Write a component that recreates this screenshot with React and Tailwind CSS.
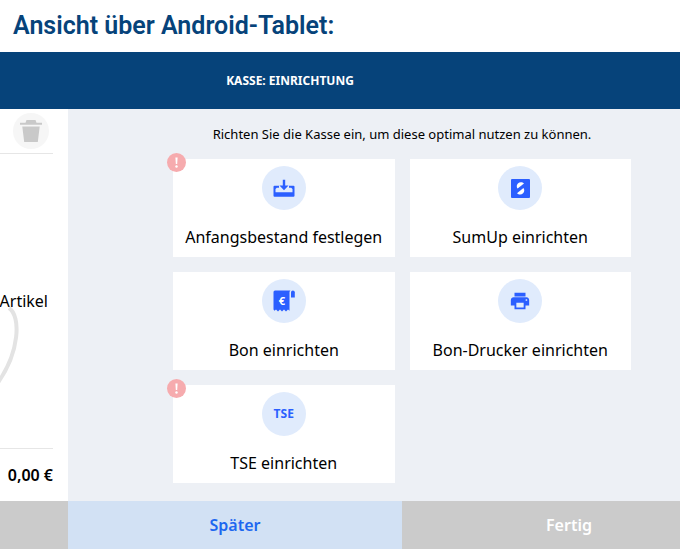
const DepositIcon = () => (
  <svg viewBox="0 0 24 24" className="size-6" fill="#2b5fff">
    <path d="M10.800 3.800h2.400V9.500H16.500L12 14.200 7.500 9.500h3.300z" />
    <path d="M2.500 9.800H7v2H4.800L3.500 13v3.200h17V13l-1.300-1.200H17v-2h4.500a1 1 0 0 1 1 1v8.900a1 1 0 0 1-1 1h-19a1 1 0 0 1-1-1v-8.900a1 1 0 0 1 1-1z" />
  </svg>
);

const SumUpIcon = () => (
  <svg viewBox="0 0 24 24" className="size-6">
    <rect x="3" y="3" width="19" height="19" rx="1" fill="#2b5fff" />
    <path d="M16 7.500C14.300 5.700 11.500 5.800 9.900 7.400 8.400 8.900 8.400 11 9.600 12.600z" fill="#fff" />
    <path d="M9 17.200c1.700 1.800 4.500 1.700 6.100.1 1.500-1.500 1.500-3.600.3-5.200z" fill="#fff" />
  </svg>
);

const ReceiptIcon = () => (
  <svg viewBox="0 0 24 24" className="size-6" fill="#2b5fff">
    <path d="M3 1.500h15.500a2 2 0 0 0-1 1.700v18.600l-1.500-1.300-2 1.900-2-1.900-2 1.900-2-1.900-2 1.900-2-1.900-1.500 1.300-1-1.300V3a1.500 1.500 0 0 1 1.500-1.500z" />
    <path d="M19 8.500V3.300a1.900 1.900 0 0 1 3.800 0v5.200z" />
    <text x="9.800" y="15.500" textAnchor="middle" fill="#fff" fontSize="11" fontWeight="700" fontFamily="Noto Sans, sans-serif">
      €
    </text>
  </svg>
);

const PrinterIcon = () => (
  <svg viewBox="0 0 24 24" className="size-[22px]" fill="#2b5fff">
    <path d="M19 8H5c-1.660 0-3 1.340-3 3v6h4v4h12v-4h4v-6c0-1.660-1.340-3-3-3zm-3 11H8v-5h8v5zm3-7c-.55 0-1-.45-1-1s.45-1 1-1 1 .45 1 1-.45 1-1 1zm-1-9H6v4h12V3z" />
  </svg>
);

const TseIcon = () => (
  <span className="font-['Open_Sans',sans-serif] text-xs font-bold text-[#2b5fff]">TSE</span>
);

const steps = [
  { label: "Anfangsbestand festlegen", Icon: DepositIcon, required: true },
  { label: "SumUp einrichten", Icon: SumUpIcon },
  { label: "Bon einrichten", Icon: ReceiptIcon },
  { label: "Bon-Drucker einrichten", Icon: PrinterIcon },
  { label: "TSE einrichten", Icon: TseIcon, required: true },
];

// Round badge on the corner of steps that still have to be done
const RequiredBadge = () => (
  <span className="absolute -left-1.5 -top-1.5 flex size-[19px] items-center justify-center rounded-full bg-[#f6abae]">
    <svg viewBox="0 0 19 19" className="size-full" fill="#fff">
      <path d="M8.400 4.500h2.200l-.4 6.500H8.800z" />
      <circle cx="9.500" cy="13.500" r="1.200" />
    </svg>
  </span>
);

const StepCard = ({ label, Icon, required }) => (
  <button type="button" className="relative flex h-[98px] flex-col items-center bg-white pt-[7px] text-black">
    {required && <RequiredBadge />}
    <span className="flex size-11 items-center justify-center rounded-full bg-[#e0ebfc]">
      <Icon />
    </span>
    <span className="mt-[15px] whitespace-nowrap text-base leading-6">{label}</span>
  </button>
);

const CartPanel = () => (
  <aside className="flex w-[68px] shrink-0 flex-col overflow-hidden bg-white">
    <div className="mr-[15px] flex h-[45px] justify-end border-b border-[#e6e6e6] pr-1 pt-1">
      <button type="button" aria-label="Warenkorb leeren" className="flex size-9 items-center justify-center rounded-full bg-[#f6f6f6]">
        <svg viewBox="0 0 24 24" className="size-6" fill="#c9c9c9">
          <path d="M7.500 1h9l1 2.800H23v2H1v-2h5.500zM3.300 7.500h17.400L18.800 23H5.200z" />
        </svg>
      </button>
    </div>
    <div className="mr-[15px] flex grow flex-col items-end border-b border-[#e6e6e6] pt-[135px]">
      <p className="whitespace-nowrap pr-[5px] text-base leading-6">Artikel</p>
      <svg viewBox="0 0 53 90" className="-mt-4 h-[90px] w-[53px]" fill="none" stroke="#e3e3e3" strokeWidth="4">
        <path d="M9 11C21 19 20 55 -3 87" />
      </svg>
    </div>
    <p className="mr-[15px] flex h-[52px] items-center justify-end whitespace-nowrap text-base font-semibold">0,00 €</p>
    <div className="h-12 bg-[#cbcbcb]" />
  </aside>
);

export default function App() {
  return (
    <div className="overflow-hidden bg-white font-['Noto_Sans','Open_Sans',sans-serif] text-black">
      <h1 className="flex h-[52px] items-center pl-[13px] font-[Roboto,sans-serif] text-[25px] font-semibold text-[#06437a]">
        Ansicht über Android-Tablet:
      </h1>
      <header className="flex h-[57px] items-center justify-center bg-[#06437a] pr-[100px] text-xs font-bold text-white">
        KASSE: EINRICHTUNG
      </header>
      <div className="flex">
        <CartPanel />
        {/* runs on past the right edge */}
        <main className="-mr-14 flex grow flex-col bg-[#edf0f5]">
          <div className="grow px-[105px] pb-[18px]">
            <p className="pb-[15px] pt-[15px] text-center text-[13px] leading-5">
              Richten Sie die Kasse ein, um diese optimal nutzen zu können.
            </p>
            <div className="grid grid-cols-2 gap-[15px]">
              {steps.map((step) => (
                <StepCard key={step.label} {...step} />
              ))}
            </div>
          </div>
          <footer className="grid h-12 grid-cols-2 text-base font-semibold">
            <button type="button" className="bg-[#d2e1f4] text-[#1d67f0]">Später</button>
            <button type="button" disabled className="bg-[#cbcbcb] text-white">Fertig</button>
          </footer>
        </main>
      </div>
    </div>
  );
}
